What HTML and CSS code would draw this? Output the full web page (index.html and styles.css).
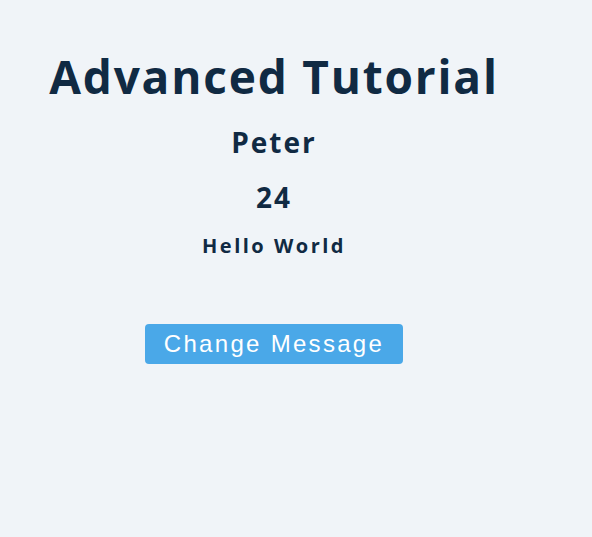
FILE: index.html
```html
<!DOCTYPE html>
<html>
<head>
<meta charset="utf-8">
<link rel="stylesheet" href="styles.css">
</head>
<body>
<div class="app">
  <h1 class="title">Advanced Tutorial</h1>
  <h2 class="name">Peter</h2>
  <h2 class="age">24</h2>
  <h3 class="msg">Hello World</h3>
  <button class="btn">Change Message</button>
</div>
</body>
</html>
```
FILE: styles.css
```css
html, body {
  margin: 0;
  background: #f0f4f8;
}
body {
  padding: 8px;
  height: 537px;
  box-sizing: border-box;
}
.app {
  width: 532px;
  display: flex;
  flex-direction: column;
  align-items: center;
  color: #102a43;
  font-family: "Open Sans", "Noto Sans", sans-serif;
  font-weight: 700;
}
.title {
  margin: 0;
  margin-top: 36px;
  font-size: 46px;
  line-height: 64px;
  letter-spacing: 1.8px;
}
.name {
  margin: 0;
  margin-top: 14px;
  font-size: 28px;
  line-height: 40px;
  letter-spacing: 2px;
}
.age {
  margin: 0;
  margin-top: 15px;
  font-size: 28px;
  line-height: 40px;
  letter-spacing: 2px;
}
.msg {
  margin: 0;
  margin-top: 15px;
  font-size: 20px;
  line-height: 28px;
  letter-spacing: 2.5px;
}
.btn {
  margin-top: 64px;
  width: 258px;
  height: 40px;
  border: none;
  border-radius: 4px;
  background: #4aa8e8;
  color: #ffffff;
  font-family: "Liberation Sans", Arial, sans-serif;
  font-size: 24px;
  letter-spacing: 2.3px;
  padding: 0;
}
```
